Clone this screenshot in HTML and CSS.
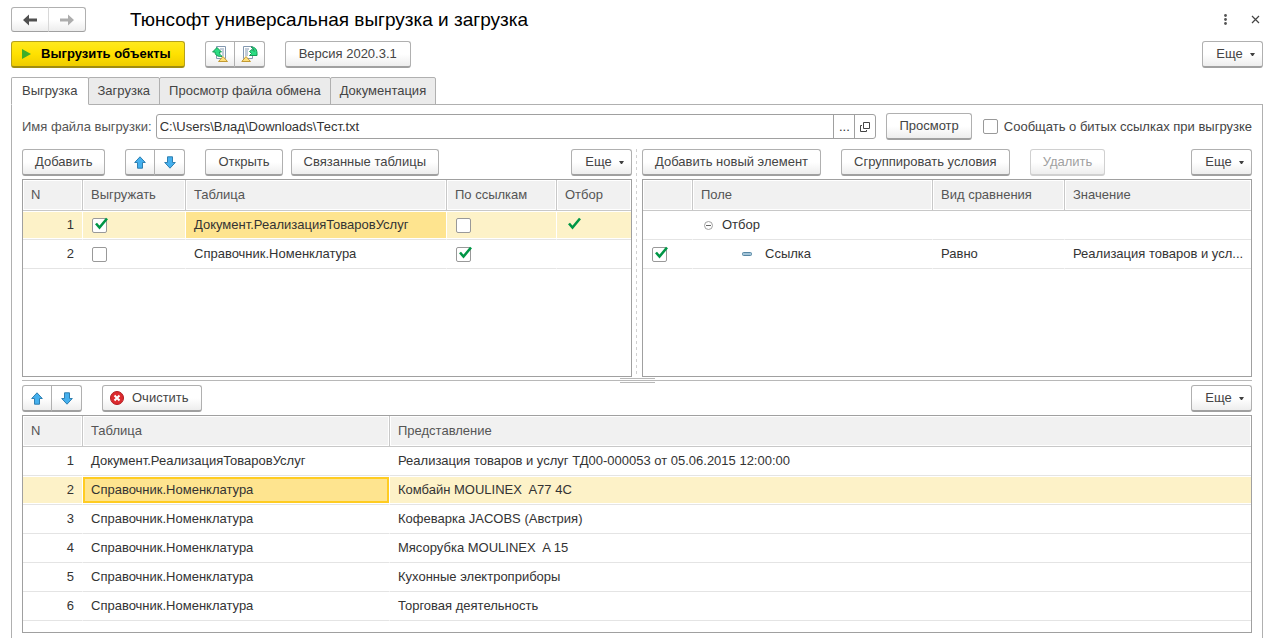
FILE: index.html
```
<!DOCTYPE html>
<html lang="ru">
<head>
    <meta charset="UTF-8">
    <meta name="viewport" content="width=device-width, initial-scale=1.0">
    <title>Тюнсофт универсальная выгрузка и загрузка</title>
    <link rel="stylesheet" href="styles.css">
</head>
<body>
    <!-- Shared icons -->
    <svg class="sprite" aria-hidden="true">
        <symbol id="arrow-up" viewBox="0 0 12 13">
            <path d="M6 .8 11.3 6.5H8.5v5.7h-5V6.5H.7z" fill="#45b0ee" stroke="#2f7fb0"/>
        </symbol>
        <symbol id="arrow-down" viewBox="0 0 12 13">
            <path d="M6 12.2 .7 6.5h2.8V.8h5v5.7h2.8z" fill="#45b0ee" stroke="#2f7fb0"/>
        </symbol>
        <symbol id="caret" viewBox="0 0 5 3">
            <path d="M0 0h5L3 3H2z" fill="#404040"/>
        </symbol>
    </svg>

    <header class="title-bar">
        <div class="btn-group nav-group">
            <button type="button" class="btn" aria-label="Назад">
                <svg width="14" height="12" viewBox="0 0 14 12"><path d="M0 6 6 .5V4.500h8v3H6v4z" fill="#505050"/></svg>
            </button>
            <button type="button" class="btn" aria-label="Вперед">
                <svg width="14" height="12" viewBox="0 0 14 12"><path d="M14 6 8 .5V4.500H0v3h8v4z" fill="#adadad"/></svg>
            </button>
        </div>
        <h1>Тюнсофт универсальная выгрузка и загрузка</h1>
        <div class="window-buttons">
            <button type="button" aria-label="Меню">
                <svg width="3" height="11" viewBox="0 0 3 11" fill="#555"><circle cx="1.500" cy="1.500" r="1.400"/><circle cx="1.500" cy="5.500" r="1.400"/><circle cx="1.500" cy="9.500" r="1.400"/></svg>
            </button>
            <button type="button" aria-label="Закрыть">
                <svg width="9" height="9" viewBox="0 0 9 9"><path d="M1 1l7 7M8 1 1 8" stroke="#444" stroke-width="1.200"/></svg>
            </button>
        </div>
    </header>

    <div class="toolbar main-toolbar">
        <button type="button" class="btn btn-primary">
            <svg width="9" height="10" viewBox="0 0 9 10"><path d="M0 0l9 5-9 5z" fill="#3fae29"/></svg>
            Выгрузить объекты
        </button>
        <div class="btn-group">
            <button type="button" class="btn" aria-label="Сохранить настройки">
                <svg width="16" height="16" viewBox="0 0 16 16">
                    <path d="M4.500.5h9v12h-9z" fill="#fff" stroke="#8398b0"/>
                    <path d="M8 3h4M10 5h2M10 7h2M10 9h2" stroke="#8398b0"/>
                    <path d="M5 1.500 9.500 6H7.500c0 2 .7 3 2.700 4.500C6 10.700 3 9.500 3 6H.6z" fill="#2bdc82" stroke="#139a55"/>
                    <path d="M6.500 15.500 11 10.500l4.500 5z" fill="#ffe07a" stroke="#c29a33"/>
                </svg>
            </button>
            <button type="button" class="btn" aria-label="Восстановить настройки">
                <svg width="17" height="16" viewBox="0 0 17 16">
                    <path d="M2.500.5h9v12h-9z" fill="#fff" stroke="#8398b0"/>
                    <path d="M4 3h4M4 5h3M4 7h3M4 9h3" stroke="#8398b0"/>
                    <path d="M10 1c4 0 6.500 2 6 8.500H8.500L10.500 7.500 8.500 5.500 11 3.500 13 5.500C13 3.500 12 2 10 1z" fill="#2bdc82" stroke="#139a55"/>
                    <path d="M.8 15.500 5 10.500l4.500 5z" fill="#ffe07a" stroke="#c29a33"/>
                </svg>
            </button>
        </div>
        <button type="button" class="btn">Версия 2020.3.1</button>
        <button type="button" class="btn btn-more">Еще <svg width="5" height="3"><use href="#caret"/></svg></button>
    </div>

    <div class="tabs" role="tablist">
        <button type="button" class="tab active" role="tab" aria-selected="true">Выгрузка</button>
        <button type="button" class="tab" role="tab" aria-selected="false">Загрузка</button>
        <button type="button" class="tab" role="tab" aria-selected="false">Просмотр файла обмена</button>
        <button type="button" class="tab" role="tab" aria-selected="false">Документация</button>
    </div>

    <main class="panel">
        <div class="file-row">
            <label for="fileName">Имя файла выгрузки:</label>
            <div class="file-field">
                <input type="text" id="fileName" value="C:\Users\Влад\Downloads\Тест.txt">
                <button type="button" aria-label="Выбрать">...</button>
                <button type="button" aria-label="Открыть файл">
                    <svg width="10" height="10" viewBox="0 0 10 10"><path d="M3.500.5h6v6h-6zM2 3.500H.5v6h6V8" fill="none" stroke="#444"/></svg>
                </button>
            </div>
            <button type="button" class="btn">Просмотр</button>
            <label class="check-label"><input type="checkbox" class="check"> Сообщать о битых ссылках при выгрузке</label>
        </div>

        <div class="split">
            <section class="pane">
                <div class="toolbar">
                    <button type="button" class="btn">Добавить</button>
                    <div class="btn-group">
                        <button type="button" class="btn" aria-label="Вверх"><svg width="12" height="13"><use href="#arrow-up"/></svg></button>
                        <button type="button" class="btn" aria-label="Вниз"><svg width="12" height="13"><use href="#arrow-down"/></svg></button>
                    </div>
                    <button type="button" class="btn">Открыть</button>
                    <button type="button" class="btn btn-near">Связанные таблицы</button>
                    <button type="button" class="btn btn-more">Еще <svg width="5" height="3"><use href="#caret"/></svg></button>
                </div>
                <div class="table-box">
                    <table>
                        <colgroup>
                            <col class="col-n"><col class="col-export"><col><col class="col-links"><col class="col-filter">
                        </colgroup>
                        <thead>
                            <tr><th>N</th><th>Выгружать</th><th>Таблица</th><th>По ссылкам</th><th>Отбор</th></tr>
                        </thead>
                        <tbody>
                            <tr class="selected">
                                <td class="num">1</td>
                                <td><input type="checkbox" class="check" aria-label="Выгружать" checked></td>
                                <td class="current">Документ.РеализацияТоваровУслуг</td>
                                <td><input type="checkbox" class="check" aria-label="По ссылкам"></td>
                                <td><svg class="tick" width="15" height="13" viewBox="0 0 15 13"><path d="M2 6.500 5.500 10.500 13 1.500" fill="none" stroke="#009646" stroke-width="2.600"/></svg></td>
                            </tr>
                            <tr>
                                <td class="num">2</td>
                                <td><input type="checkbox" class="check" aria-label="Выгружать"></td>
                                <td>Справочник.Номенклатура</td>
                                <td><input type="checkbox" class="check" aria-label="По ссылкам" checked></td>
                                <td></td>
                            </tr>
                        </tbody>
                    </table>
                </div>
            </section>
            <div class="divider"></div>
            <section class="pane">
                <div class="toolbar">
                    <button type="button" class="btn">Добавить новый элемент</button>
                    <button type="button" class="btn">Сгруппировать условия</button>
                    <button type="button" class="btn" disabled>Удалить</button>
                    <button type="button" class="btn btn-more">Еще <svg width="5" height="3"><use href="#caret"/></svg></button>
                </div>
                <div class="table-box">
                    <table>
                        <colgroup>
                            <col class="col-use"><col><col class="col-compare"><col class="col-value">
                        </colgroup>
                        <thead>
                            <tr><th></th><th>Поле</th><th>Вид сравнения</th><th>Значение</th></tr>
                        </thead>
                        <tbody>
                            <tr>
                                <td></td>
                                <td>
                                    <div class="node">
                                        <svg width="9" height="9" viewBox="0 0 9 9"><circle cx="4.500" cy="4.500" r="4" fill="none" stroke="#a0a0a0"/><path d="M2 4.500h5" stroke="#666"/></svg>
                                        Отбор
                                    </div>
                                </td>
                                <td></td>
                                <td></td>
                            </tr>
                            <tr>
                                <td><input type="checkbox" class="check" aria-label="Использование" checked></td>
                                <td>
                                    <div class="node leaf">
                                        <svg width="10" height="4" viewBox="0 0 10 4"><rect x=".5" y=".5" width="9" height="3" rx="1" fill="#a3c4d8" stroke="#5786a3"/></svg>
                                        Ссылка
                                    </div>
                                </td>
                                <td>Равно</td>
                                <td>Реализация товаров и усл...</td>
                            </tr>
                        </tbody>
                    </table>
                </div>
            </section>
        </div>

        <div class="splitter"><span class="grip"></span></div>

        <section class="pane">
            <div class="toolbar">
                <div class="btn-group">
                    <button type="button" class="btn" aria-label="Вверх"><svg width="12" height="13"><use href="#arrow-up"/></svg></button>
                    <button type="button" class="btn" aria-label="Вниз"><svg width="12" height="13"><use href="#arrow-down"/></svg></button>
                </div>
                <button type="button" class="btn btn-clear">
                    <svg width="14" height="14" viewBox="0 0 14 14"><circle cx="7" cy="7" r="6.500" fill="#dc2a2e" stroke="#b01c20"/><path d="M4.500 4.500l5 5M9.500 4.500l-5 5" stroke="#fff" stroke-width="2"/></svg>
                    Очистить
                </button>
                <button type="button" class="btn btn-more">Еще <svg width="5" height="3"><use href="#caret"/></svg></button>
            </div>
            <div class="table-box">
                <table>
                    <colgroup>
                        <col class="col-n"><col class="col-table"><col>
                    </colgroup>
                    <thead>
                        <tr><th>N</th><th>Таблица</th><th>Представление</th></tr>
                    </thead>
                    <tbody>
                        <tr><td class="num">1</td><td>Документ.РеализацияТоваровУслуг</td><td>Реализация товаров и услуг ТД00-000053 от 05.06.2015 12:00:00</td></tr>
                        <tr class="selected"><td class="num">2</td><td class="current focused">Справочник.Номенклатура</td><td>Комбайн MOULINEX&nbsp; A77 4C</td></tr>
                        <tr><td class="num">3</td><td>Справочник.Номенклатура</td><td>Кофеварка JACOBS (Австрия)</td></tr>
                        <tr><td class="num">4</td><td>Справочник.Номенклатура</td><td>Мясорубка MOULINEX&nbsp; A 15</td></tr>
                        <tr><td class="num">5</td><td>Справочник.Номенклатура</td><td>Кухонные электроприборы</td></tr>
                        <tr><td class="num">6</td><td>Справочник.Номенклатура</td><td>Торговая деятельность</td></tr>
                    </tbody>
                </table>
            </div>
        </section>
    </main>
</body>
</html>
```
FILE: styles.css
```
* {
    box-sizing: border-box;
}
body {
    display: flex;
    flex-direction: column;
    min-height: 100vh;
    margin: 0;
    padding: 6px 7px 0 11px;
    background: #fff;
    color: #333;
    font-family: "Liberation Sans", Arial, sans-serif;
    font-size: 13px;
    line-height: 16px;
}
button, input {
    font: inherit;
    color: inherit;
}
svg {
    display: block;
    flex: none;
}
.sprite {
    position: absolute;
    width: 0;
    height: 0;
}

/* Title */
.title-bar {
    display: flex;
    align-items: center;
    height: 27px;
}
.title-bar h1 {
    flex: 1;
    margin: 0 0 0 44px;
    color: #000;
    font-size: 19px;
    font-weight: normal;
    line-height: 24px;
}
.window-buttons {
    display: flex;
    gap: 14px;
}
.window-buttons button {
    display: flex;
    align-items: center;
    justify-content: center;
    width: 16px;
    height: 16px;
    padding: 0;
    border: none;
    background: none;
}

/* Buttons */
.btn {
    display: flex;
    align-items: center;
    justify-content: center;
    height: 27px;
    padding: 0 12px;
    border: 1px solid #b0b0b0;
    border-bottom: 2px solid #a0a0a0;
    border-radius: 3px;
    background: linear-gradient(#fff 50%, #ededed);
    color: #444;
    white-space: nowrap;
}
.btn:disabled {
    border-color: #d0d0d0;
    color: #a0a0a0;
}
.main-toolbar .btn {
    padding: 0 13px;
}
.main-toolbar .btn-primary {
    gap: 10px;
    padding-left: 10px;
    border-color: #b5a11c;
    border-bottom-color: #a08d10;
    background: linear-gradient(#ffe91f, #ffe100 50%, #efcc00);
    color: #000;
    font-weight: bold;
}
.btn-more, .main-toolbar .btn-more {
    gap: 7px;
    width: 61px;
    margin-left: auto;
    padding: 0 6px 0 12px;
}
.btn-clear {
    gap: 8px;
    padding-left: 7px;
}
.btn-group {
    display: flex;
}
.btn-group .btn, .main-toolbar .btn-group .btn {
    width: 30px;
    padding: 0;
}
.btn-group .btn:first-child {
    border-radius: 3px 0 0 3px;
}
.btn-group .btn:last-child {
    width: 31px;
    margin-left: -1px;
    border-radius: 0 3px 3px 0;
}
.nav-group .btn, .nav-group .btn:last-child {
    width: 38px;
    height: 25px;
    border-bottom-width: 1px;
}
.nav-group .btn:last-child {
    border-left-color: #d8d8d8;
}
.toolbar {
    display: flex;
    gap: 20px;
}
.btn-near {
    margin-left: -12px;
}
.main-toolbar {
    margin-top: 8px;
}

/* Tabs */
.tabs {
    display: flex;
    margin-top: 9px;
}
.tab {
    height: 28px;
    margin-right: -1px;
    padding: 0 9px;
    border: 1px solid #b0b0b0;
    border-radius: 2px 2px 0 0;
    background: #ebebeb;
    color: #444;
}
.tab.active {
    z-index: 1;
    padding: 0 10px;
    border-bottom-color: #fff;
    background: #fff;
}
.panel {
    display: flex;
    flex: 1;
    flex-direction: column;
    margin-top: -1px;
    padding: 8px 10px 5px;
    border: 1px solid #b0b0b0;
    border-bottom: none;
}

/* File name */
.file-row {
    display: flex;
    align-items: center;
    color: #555;
}
.file-field {
    display: flex;
    flex: 1;
    height: 25px;
    margin: 0 10px 0 4px;
    border: 1px solid #a0a0a0;
    border-radius: 3px;
    color: #333;
}
.file-field input {
    flex: 1;
    min-width: 0;
    padding: 0 3px;
    border: none;
    background: none;
    outline: none;
}
.file-field button {
    display: flex;
    align-items: center;
    justify-content: center;
    width: 21px;
    padding: 0;
    border: none;
    border-left: 1px solid #a0a0a0;
    background: none;
}
.check-label {
    display: flex;
    align-items: center;
    gap: 6px;
    margin-left: 11px;
    color: #444;
}

/* Check boxes, the tick sticks out of the box */
.check {
    position: relative;
    display: block;
    flex: none;
    width: 15px;
    height: 15px;
    margin: 0;
    border: 1px solid #999;
    border-radius: 2px;
    background: #fff;
    appearance: none;
}
.check:checked::after {
    content: "";
    position: absolute;
    top: -2px;
    left: 1px;
    width: 15px;
    height: 13px;
    background: url("data:image/svg+xml,%3Csvg xmlns='http://www.w3.org/2000/svg' viewBox='0 0 15 13'%3E%3Cpath d='M2 6.500 5.500 10.500 13 1.500' fill='none' stroke='%23009646' stroke-width='2.600'/%3E%3C/svg%3E");
}
td .check {
    margin-left: 1px;
}
.tick {
    margin: 0 0 4px 2px;
}

/* Panes */
.split {
    display: flex;
    margin-top: 9px;
}
.pane {
    display: flex;
    flex: 1;
    flex-direction: column;
    gap: 3px;
    min-width: 0;
}
.split .table-box {
    min-height: 198px;
}
.divider {
    width: 10px;
    background: repeating-linear-gradient(#d0d0d0 0 3px, #fff 3px 6px) 4px 0 / 1px 100% no-repeat;
}
.splitter {
    display: flex;
    align-items: center;
    justify-content: center;
    height: 8px;
    background: linear-gradient(#b8b8b8, #b8b8b8) 0 3px / 100% 1px no-repeat;
}
.grip {
    width: 35px;
    height: 5px;
    margin-bottom: 1px;
    border: solid #b8b8b8;
    border-width: 1px 0;
}

/* Tables */
.table-box {
    flex: 1;
    border: 1px solid #a0a0a0;
}
table {
    width: 100%;
    border-collapse: separate;
    border-spacing: 0;
    table-layout: fixed;
}
th, td {
    overflow: hidden;
    padding: 0 8px;
    border-bottom: 1px solid #e4e4e4;
    text-align: left;
    text-overflow: ellipsis;
    white-space: nowrap;
}
th {
    height: 31px;
    border-right: 1px solid #c8c8c8;
    border-bottom-color: #c8c8c8;
    background: #f1f1f1;
    box-shadow: inset 0 0 0 1px #fff;
    color: #555;
    font-weight: normal;
}
td {
    height: 29px;
    border-right: 1px solid transparent;
}
th:last-child, td:last-child {
    padding-right: 4px;
    border-right: none;
}
.num {
    text-align: right;
}
.selected td {
    border-right-color: #fff;
    background: #fdf2c8;
    box-shadow: inset 0 1px #fff, inset 0 -1px #fff;
}
.selected .current {
    background: #fee48f;
}
/* White strips above and below the frame keep it off the row lines */
.selected .focused {
    box-shadow: inset 0 1px #fff, inset 0 -1px #fff, inset 2px 0 #fc2, inset -2px 0 #fc2, inset 0 3px #fc2, inset 0 -3px #fc2;
}
.col-n {
    width: 60px;
}
.col-export {
    width: 103px;
}
.col-links {
    width: 110px;
}
.col-filter {
    width: 74px;
}
.col-use {
    width: 50px;
}
.col-compare {
    width: 132px;
}
.col-value {
    width: 186px;
}
.col-table {
    width: 307px;
}
.node {
    display: flex;
    align-items: center;
    gap: 9px;
    padding-left: 3px;
}
.leaf {
    gap: 13px;
    padding-left: 41px;
}
```
